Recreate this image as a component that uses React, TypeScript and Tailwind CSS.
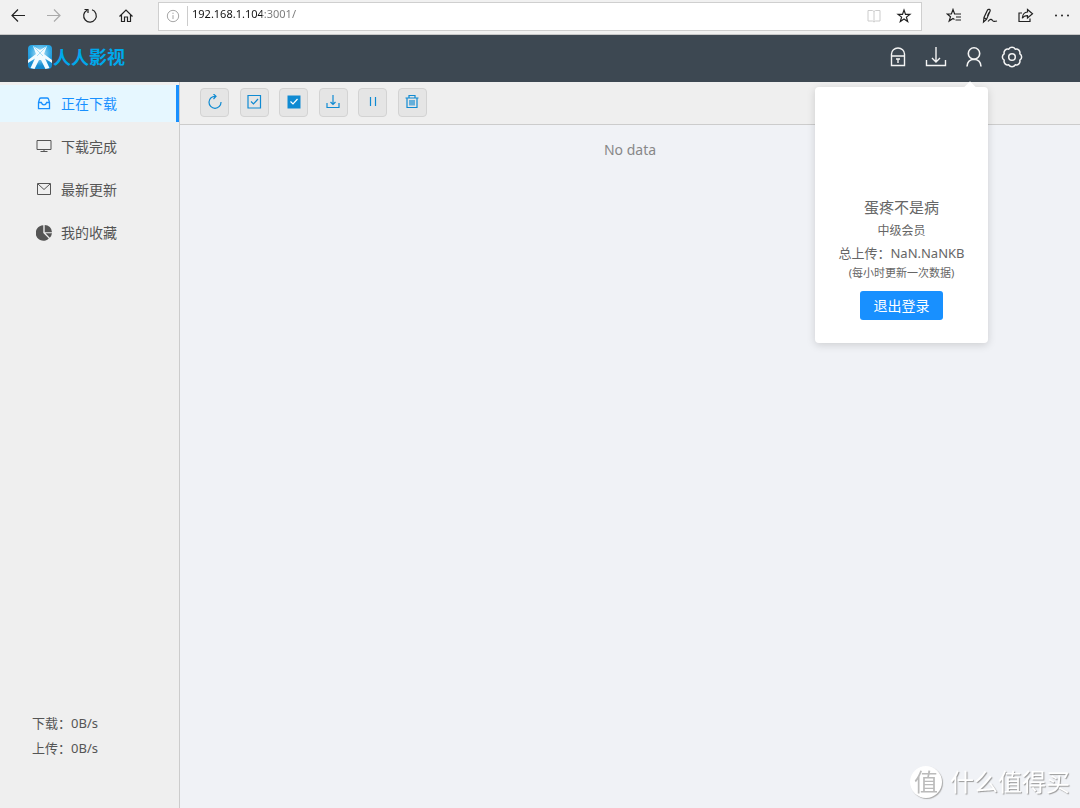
import type { ReactNode } from 'react';

interface IconProps {
  children: ReactNode;
  size?: string;
  box?: number;
  width?: number;
}

function Icon({ children, size = 'size-4', box = 16, width = 1 }: IconProps) {
  return (
    <svg
      viewBox={`0 0 ${box} ${box}`}
      className={`${size} shrink-0`}
      fill="none"
      stroke="currentColor"
      strokeWidth={width}
      aria-hidden="true"
    >
      {children}
    </svg>
  );
}

const historyButtons = [
  { label: 'Back', tone: 'text-[#222]', icon: <path d="M15 7.5H2M8 1.5l-6 6 6 6" /> },
  { label: 'Forward', tone: 'text-[#aaa]', icon: <path d="M1 7.5h13M8 1.5l6 6-6 6" /> },
  {
    label: 'Refresh',
    tone: 'text-[#222]',
    icon: <path d="M10 1.8A6.3 6.3 0 1 1 5 2.2M2.5 1.5H6V5" />,
  },
  {
    label: 'Home',
    tone: 'text-[#222]',
    icon: <path d="M1.5 8.5 8 2l6.5 6.5M3.5 7v6.5h3V9h3v4.5h3V7" />,
  },
];

const browserButtons = [
  {
    label: 'Favorites',
    icon: <path d="M9.5 6H8.6L7 1.5 5.4 6H1.2l3.3 2.8L3.2 13 7 10.4l1.5 1M8.500 6H15M10 9h5M9.500 12H15" />,
  },
  {
    label: 'Notes',
    icon: (
      <path d="M1.500 14 2 9.500 5.500 2c.8-1.400 3.300-.5 2.600 1L4.500 11.500 1.500 14ZM2 9.500l2.500 2M7 4.500 5.500 8M6 13.500c2-2.500 3.500-2.700 4.500-1 .8 1.200 2 1.300 4.500.5" />
    ),
  },
  {
    label: 'Share',
    icon: (
      <path d="M4 5H1v8.500h11V10.500M9.500 1.500l5 4.300-5 4.200V7.600C7 7.600 5.500 8.300 4.300 10.300 4.500 7 6.300 4.200 9.500 4Z" />
    ),
  },
  {
    label: 'More',
    icon: (
      <g fill="currentColor" stroke="none">
        <circle cx="2" cy="7.500" r="1" />
        <circle cx="8" cy="7.500" r="1" />
        <circle cx="14" cy="7.500" r="1" />
      </g>
    ),
  },
];

const menu = [
  {
    label: '正在下载',
    active: true,
    icon: (
      <path
        strokeWidth="1.300"
        d="M2.500 6.500 3.500 3c.3-.8.7-1 1.500-1h6c.8 0 1.200.2 1.500 1l1 3.500v6.200h-11ZM2.500 6.500h2.800c.5 1.700 1.400 2.300 2.700 2.300s2.200-.6 2.700-2.300h2.800"
      />
    ),
  },
  {
    label: '下载完成',
    active: false,
    icon: <path d="M1 1.500h14v9H1zM8 10.500v2M4.500 12.500h7" />,
  },
  {
    label: '最新更新',
    active: false,
    icon: <path d="M1.500 1.500h13v11h-13zM2 2l6 5.500L14 2" />,
  },
  {
    label: '我的收藏',
    active: false,
    icon: (
      <g fill="currentColor" stroke="none">
        <path d="M7.300.3V8l5.500 5.500A7.700 7.700 0 1 1 7.300.3Z" />
        <path d="M8.700 0A7.300 7.300 0 0 1 16 7.200H8.700Z" />
        <path d="M9.500 8.300H16a7.500 7.500 0 0 1-2.200 4.400Z" />
      </g>
    ),
  },
];

const tools = [
  {
    label: '刷新',
    icon: <path d="M8.500 2.300A6 6 0 1 0 14 8M6.500 0 9 2.300 6.500 5" />,
  },
  {
    label: '选择',
    icon: <path d="M2 1.500h12.500v12.500H2zM5 7.500 7.500 10l4.500-5" />,
  },
  {
    label: '全选',
    icon: (
      <>
        <path d="M1.500 1.500h13v13h-13z" fill="currentColor" stroke="none" />
        <path d="m4.500 7.500 2.500 2.500 4.500-5" stroke="white" />
      </>
    ),
  },
  {
    label: '下载',
    icon: <path d="M8 1v9.500M5.500 8 8 10.500 10.500 8M2 9v4.500h12V9" />,
  },
  { label: '暂停', icon: <path d="M5.500 3v9M10.500 3v9" /> },
  {
    label: '删除',
    icon: <path d="M1.500 4h13M5 4V1.500h6V4M3 4v9.500h10V4M6 6v5.500M8 6v5.500M10 6v5.500" />,
  },
];

function BrowserBar() {
  return (
    <div className="flex h-[35px] items-center border-b border-[#c8c8c8] bg-[#f1f1f1] pb-0.5">
      {historyButtons.map((b) => (
        <button key={b.label} aria-label={b.label} className={`flex h-8 w-9 items-center justify-center ${b.tone}`}>
          <Icon width={1.2}>{b.icon}</Icon>
        </button>
      ))}
      <div className="mx-3.5 flex h-[29px] flex-1 items-center border border-[#cfcfcf] bg-white">
        <span className="flex w-7 justify-center text-[#999]">
          <Icon size="size-3.5">
            <circle cx="8" cy="8" r="6.500" />
            <path d="M8 7v4.500M8 4.200v1.500" />
          </Icon>
        </span>
        <span className="h-5 w-px bg-[#ccc]" />
        <input
          aria-label="Address"
          defaultValue="192.168.1.104:3001/"
          className="mb-1 min-w-0 flex-1 bg-[linear-gradient(90deg,#111_74px,#777_74px)] bg-clip-text pl-1 text-[11px] text-transparent outline-none"
        />
        <button aria-label="Reading view" className="flex w-[30px] justify-center text-[#ccc]">
          <Icon>
            <path d="M8 3.500v10M2 2.500h4.500L8 3.500l1.500-1H14v10.500H9.500L8 14l-1.500-1H2z" />
          </Icon>
        </button>
        <button aria-label="Add to favorites" className="mr-0.5 flex w-[30px] justify-center text-[#222]">
          <Icon width={1.2}>
            <path d="m8 2 1.500 4.400h4.400l-3.500 2.700 1.300 4.400L8 10.900l-3.700 2.600 1.300-4.400-3.500-2.700h4.400z" />
          </Icon>
        </button>
      </div>
      {browserButtons.map((b) => (
        <button key={b.label} aria-label={b.label} className="flex h-8 w-9 items-center justify-center text-[#222]">
          <Icon width={1.2}>{b.icon}</Icon>
        </button>
      ))}
    </div>
  );
}

function Logo() {
  return (
    <a href="#" className="flex items-center gap-px text-lg leading-6 font-bold text-[#00a8ec]">
      <svg viewBox="0 0 24 24" className="size-6" aria-hidden="true">
        <defs>
          <linearGradient id="tile" x2="0" y2="1">
            <stop offset="0" stopColor="#2aa6e4" />
            <stop offset="1" stopColor="#1387cc" />
          </linearGradient>
          <radialGradient id="glow">
            <stop offset="0" stopColor="white" />
            <stop offset="1" stopColor="#7fd3f8" stopOpacity="0" />
          </radialGradient>
        </defs>
        <rect width="24" height="24" rx="4" fill="url(#tile)" />
        <circle cx="12" cy="9" r="12" fill="url(#glow)" />
        <path d="M5 1 12 5 19 1 16 9 24 15v3l-7-4.500 4.500 9.500-4 1L13 15h-2L6.500 24l-4-1L7 13.500 0 18v-3l8-6Z" fill="#f2fbff" />
        <path d="M5 1 15 11M19 1 9 11" stroke="#8fd6f5" strokeWidth="0.800" />
      </svg>
      人人影视
    </a>
  );
}

function UserCard() {
  return (
    <div className="absolute top-[41px] -right-[3px] z-10 flex h-64 w-[173px] flex-col items-center rounded bg-white pt-[108px] text-[#666] shadow-[0_2px_8px_rgba(0,0,0,0.150)]">
      <span className="absolute -top-1 right-3.5 size-2 rotate-45 bg-white" />
      <p className="text-[15px] leading-6">蛋疼不是病</p>
      <p className="text-xs leading-6">中级会员</p>
      <p className="text-[13px] leading-5">总上传：NaN.NaNKB</p>
      <p className="text-[11px] leading-5">(每小时更新一次数据)</p>
      <button className="mt-2 h-[29px] w-[83px] rounded-[3px] bg-[#1890ff] text-sm text-white">退出登录</button>
    </div>
  );
}

function Header() {
  return (
    <header className="flex h-[47px] items-center justify-between bg-[#3d4852] pr-[57px] pb-[3px] pl-7">
      <Logo />
      <div className="flex gap-4 text-[#f4f4f4]">
        <button aria-label="锁定">
          <Icon size="size-[22px]" box={22} width={1.4}>
            <path d="M4.500 10V8a6.500 6 0 0 1 13 0v11.500h-13V10h13M9 13h4M11 13v4" />
          </Icon>
        </button>
        <button aria-label="下载">
          <Icon size="size-[22px]" box={22} width={1.4}>
            <path d="M11 1v15M7 12l4 4 4-4M1.500 14v5.500h19V14" />
          </Icon>
        </button>
        <div className="relative">
          <button aria-label="用户" className="block">
            <Icon size="size-[22px]" box={22} width={1.6}>
              <circle cx="11" cy="7.500" r="5.700" />
              <path d="M4 20.500c.2-4 2.500-7 7-7.300 4.500.3 6.800 3.300 7 7.300" />
            </Icon>
          </button>
          <UserCard />
        </div>
        <button aria-label="设置">
          <Icon size="size-[22px]" box={22} width={1.5}>
            <path
              strokeLinejoin="round"
              d="M18.800 7.800a3.700 3.700 0 0 1 0 6.400 3.700 3.700 0 0 1-4.600 4.600 3.700 3.700 0 0 1-6.400 0 3.700 3.700 0 0 1-4.600-4.600 3.700 3.700 0 0 1 0-6.400 3.700 3.700 0 0 1 4.600-4.600 3.700 3.700 0 0 1 6.400 0 3.700 3.700 0 0 1 4.600 4.600Z"
            />
            <circle cx="11" cy="11" r="3.300" />
          </Icon>
        </button>
      </div>
    </header>
  );
}

function Sidebar() {
  return (
    <aside className="flex w-[180px] shrink-0 flex-col justify-between border-r border-[#ccc] bg-[#efefef] pt-[3px] pb-[47px]">
      <nav className="flex flex-col gap-1.5">
        {menu.map((item) => (
          <a
            key={item.label}
            href="#"
            className={`flex h-[37px] items-center gap-[9px] border-r-3 pl-9 text-sm ${
              item.active ? 'border-[#1890ff] bg-[#e6f7ff] text-[#1890ff]' : 'border-transparent text-[#555]'
            }`}
          >
            <Icon>{item.icon}</Icon>
            {item.label}
          </a>
        ))}
      </nav>
      <div className="pl-8 text-[13px] leading-[25px] text-[#555]">
        <p>下载：0B/s</p>
        <p>上传：0B/s</p>
      </div>
    </aside>
  );
}

function Watermark() {
  return (
    <div className="fixed right-2.5 bottom-2.5 flex items-center gap-2 text-white">
      <span className="flex size-8 items-center justify-center rounded-full bg-white text-2xl leading-8 text-[#bbb] shadow-[1px_1px_1px_#aaa]">
        值
      </span>
      <span className="text-2xl leading-8 [text-shadow:1px_1px_1px_#999]">什么值得买</span>
    </div>
  );
}

export default function App() {
  return (
    <div className="flex min-h-screen flex-col bg-[#f0f2f6] font-['Noto_Sans','Noto_Sans_CJK_SC',sans-serif]">
      <BrowserBar />
      <Header />
      <div className="flex flex-1">
        <Sidebar />
        <main className="flex-1">
          <div className="flex h-[43px] items-center border-b border-[#ccc] bg-[#efefef] pb-0.5 pl-5">
            <div className="flex w-[227px] justify-between">
              {tools.map((tool) => (
                <button
                  key={tool.label}
                  aria-label={tool.label}
                  className="flex size-[29px] items-center justify-center rounded border border-[#d3d3d3] bg-[#e5e5e5] text-[#0f8ad2]"
                >
                  <Icon width={1.2}>{tool.icon}</Icon>
                </button>
              ))}
            </div>
          </div>
          <p className="pt-[15px] text-center text-sm text-[#888]">No data</p>
        </main>
      </div>
      <Watermark />
    </div>
  );
}
